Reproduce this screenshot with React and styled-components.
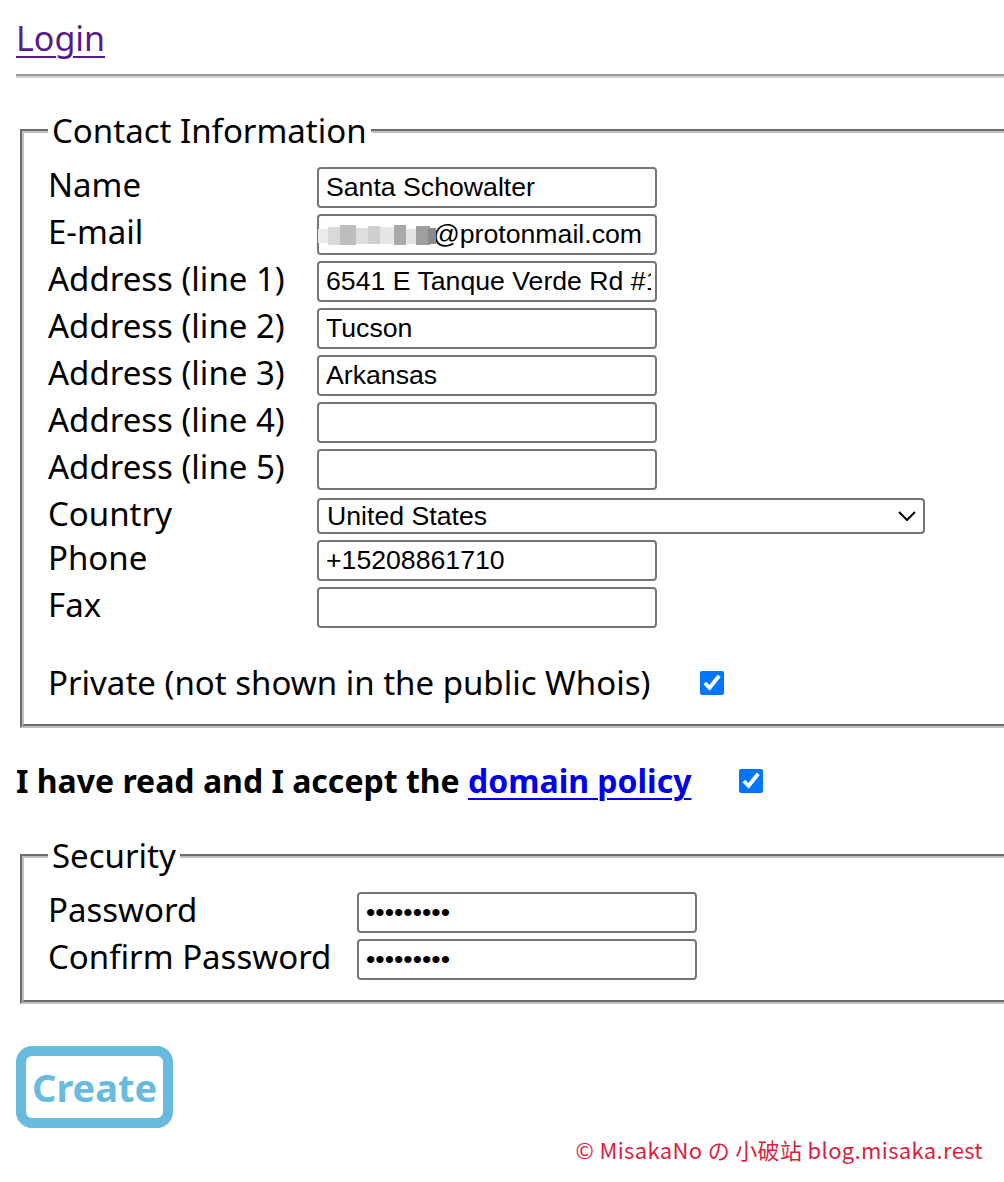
import React from 'react';
import styled, { createGlobalStyle } from 'styled-components';

const Global = createGlobalStyle`
  html, body { margin: 0; padding: 0; background: #fff; overflow-x: hidden; }
  body { font-family: "Noto Sans", "Open Sans", sans-serif; color: #000; }
`;

const Page = styled.div`
  padding: 16px;
`;

const TopBar = styled.div`
  font-size: 34px;
  line-height: 44px;
`;

const LoginLink = styled.a`
  color: #551a8b;
  text-decoration: underline;
  text-decoration-thickness: 2px;
  text-underline-offset: 5px;
`;

const Rule = styled.hr`
  height: 0;
  border: 0;
  border-top: 2px solid #9a9a9a;
  border-bottom: 2px solid #d2d2d2;
  margin: 14px -40px 0 0;
`;

const Fieldset = styled.fieldset`
  margin: ${p => p.$top}px -80px 0 4px;
  padding: 15px 24px 20px;
  border: 4px groove #c0c0c0;
  font-size: 33px;
  min-width: 0;
`;

const Legend = styled.legend`
  padding: 0 4px;
  font-size: 33px;
  line-height: 43px;
`;

const FieldGrid = styled.div`
  display: grid;
  grid-template-columns: ${p => p.$labelWidth}px auto;
  justify-content: start;
  align-items: start;
  row-gap: 6px;
`;

const Label = styled.label`
  padding-top: 2px;
  line-height: 32px;
  white-space: nowrap;
`;

const TextInput = styled.input`
  display: block;
  width: 340px;
  height: 41px;
  box-sizing: border-box;
  border: 2px solid #767676;
  border-radius: 4px;
  padding: 2px 4px 2px 7px;
  margin: 0;
  font-family: "Liberation Sans", Arial, sans-serif;
  font-size: 26.67px;
  color: #000;
  background: #fff;
  outline: none;
  text-align: ${p => (p.$alignEnd ? 'right' : 'left')};
  padding-right: ${p => (p.$alignEnd ? '13px' : '4px')};
`;

const Masked = styled.div`
  position: relative;
  width: 340px;
  height: 41px;
`;

const Blur = styled.svg`
  position: absolute;
  left: 1px;
  top: 11px;
  pointer-events: none;
`;

const SelectWrap = styled.div`
  position: relative;
  width: 608px;
  height: 36px;
  margin-top: 2px;
`;

const Select = styled.select`
  display: block;
  appearance: none;
  width: 100%;
  height: 36px;
  box-sizing: border-box;
  border: 2px solid #767676;
  border-radius: 4px;
  padding: 0 40px 0 8px;
  margin: 0;
  font-family: "Liberation Sans", Arial, sans-serif;
  font-size: 26.67px;
  color: #000;
  background: #fff;
  outline: none;
`;

const Chevron = styled.svg`
  position: absolute;
  right: 9px;
  top: 13px;
  pointer-events: none;
`;

const CheckRow = styled.div`
  display: flex;
  align-items: center;
  gap: ${p => p.$gap}px;
  margin-top: ${p => p.$top}px;
  line-height: 43px;
`;

const Check = styled.input`
  width: 24px;
  height: 24px;
  margin: 0;
  accent-color: #0075ff;
`;

const AcceptLine = styled.p`
  display: flex;
  align-items: center;
  gap: 48px;
  margin: 32px 0;
  font-size: 32px;
  line-height: 42px;
  font-weight: bold;
`;

const PolicyLink = styled.a`
  color: #0000ee;
  text-decoration: underline;
  text-decoration-thickness: 2px;
  text-underline-offset: 5px;
`;

const ButtonRow = styled.div`
  margin-top: 42px;
`;

const CreateButton = styled.button`
  height: 82px;
  box-sizing: border-box;
  padding: 0 6px;
  border: 10px solid #68bbde;
  border-radius: 16px;
  background: #fff;
  color: #68bbde;
  font-family: "Noto Sans", "Open Sans", sans-serif;
  font-weight: bold;
  font-size: 38px;
  line-height: 1;
  cursor: pointer;
`;

const Footer = styled.div`
  margin-top: 5px;
  padding-right: 5px;
  text-align: right;
  font-family: "Noto Sans CJK SC", "Noto Sans", sans-serif;
  font-size: 22px;
  letter-spacing: 0.35px;
  color: #dc1e3c;
`;

const contactRows = [
  ['Name', 'Santa Schowalter'],
  ['E-mail', null],
  ['Address (line 1)', '6541 E Tanque Verde Rd #101'],
  ['Address (line 2)', 'Tucson'],
  ['Address (line 3)', 'Arkansas'],
  ['Address (line 4)', ''],
  ['Address (line 5)', ''],
];

const blurBlocks = [
  [0, 4, 12, 14, '#ececec'],
  [10, 2, 14, 18, '#d9d9d9'],
  [22, 0, 16, 20, '#bdbdbd'],
  [38, 3, 14, 16, '#dedede'],
  [50, 1, 12, 18, '#cfcfcf'],
  [62, 2, 14, 17, '#e6e6e6'],
  [76, 0, 12, 20, '#a9a9a9'],
  [88, 4, 12, 15, '#e2e2e2'],
  [98, 1, 14, 19, '#9f9f9f'],
  [110, 3, 8, 16, '#8a8a8a'],
];

export default function App() {
  return (
    <>
      <Global />
      <Page>
        <TopBar>
          <LoginLink href="#">Login</LoginLink>
        </TopBar>
        <Rule />

        <Fieldset $top={31}>
          <Legend>Contact Information</Legend>
          <FieldGrid $labelWidth={269}>
            {contactRows.map(([label, value]) => (
              <React.Fragment key={label}>
                <Label>{label}</Label>
                {value === null ? (
                  <Masked>
                    <TextInput type="text" defaultValue="@protonmail.com" $alignEnd />
                    <Blur width="120" height="20" viewBox="0 0 120 20">
                      {blurBlocks.map(([x, y, w, h, c], i) => (
                        <rect key={i} x={x} y={y} width={w} height={h} fill={c} />
                      ))}
                    </Blur>
                  </Masked>
                ) : (
                  <TextInput type="text" defaultValue={value} />
                )}
              </React.Fragment>
            ))}
            <Label>Country</Label>
            <SelectWrap>
              <Select defaultValue="US">
                <option value="US">United States</option>
                <option value="CA">Canada</option>
              </Select>
              <Chevron width="18" height="10" viewBox="0 0 18 10">
                <path d="M1 1 L9 9 L17 1" fill="none" stroke="#000" strokeWidth="2" />
              </Chevron>
            </SelectWrap>
            <Label>Phone</Label>
            <TextInput type="text" defaultValue="+15208861710" />
            <Label>Fax</Label>
            <TextInput type="text" defaultValue="" />
          </FieldGrid>
          <CheckRow $gap={50} $top={33}>
            <span>Private (not shown in the public Whois)</span>
            <Check type="checkbox" defaultChecked />
          </CheckRow>
        </Fieldset>

        <AcceptLine>
          <span>
            I have read and I accept the <PolicyLink href="#">domain policy</PolicyLink>
          </span>
          <Check type="checkbox" defaultChecked />
        </AcceptLine>

        <Fieldset $top={0}>
          <Legend>Security</Legend>
          <FieldGrid $labelWidth={309}>
            <Label>Password</Label>
            <TextInput type="password" defaultValue="123456789" />
            <Label>Confirm Password</Label>
            <TextInput type="password" defaultValue="123456789" />
          </FieldGrid>
        </Fieldset>

        <ButtonRow>
          <CreateButton type="button">Create</CreateButton>
        </ButtonRow>

        <Footer>© MisakaNo の 小破站 blog.misaka.rest</Footer>
      </Page>
    </>
  );
}
